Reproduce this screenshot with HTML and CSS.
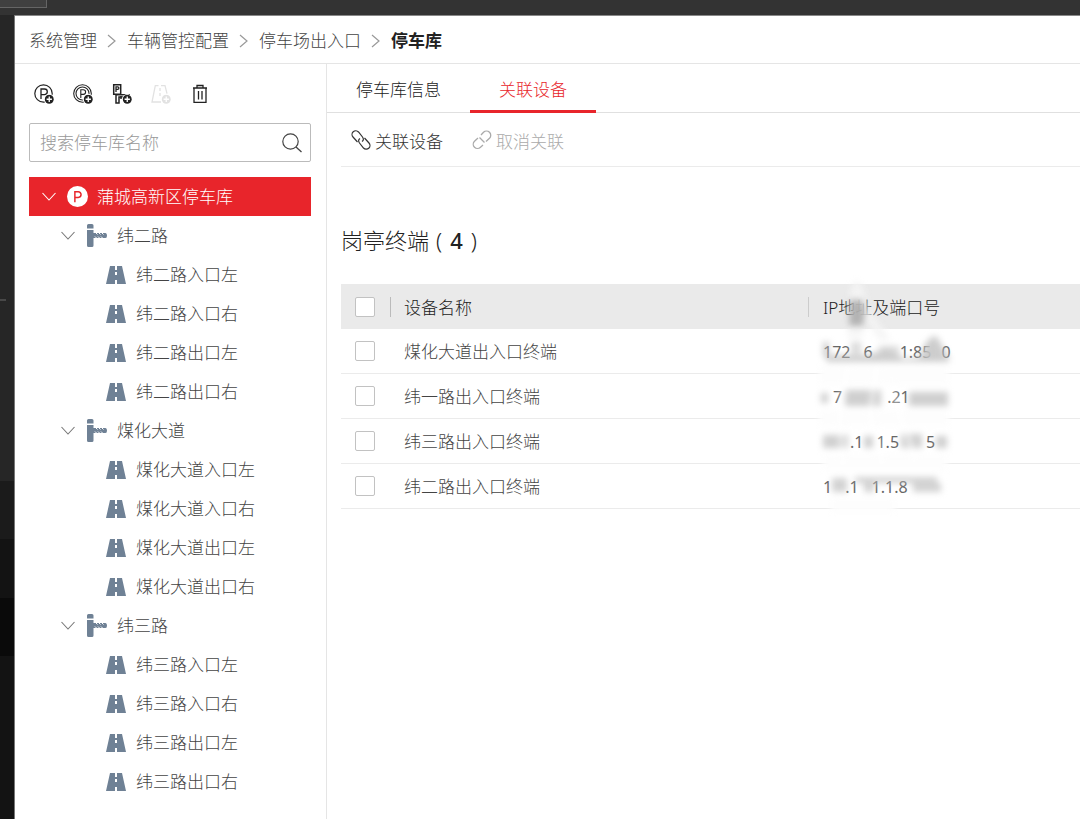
FILE: index.html
```html
<!DOCTYPE html>
<html lang="zh-CN">
<head>
<meta charset="utf-8">
<meta name="viewport" content="width=device-width, initial-scale=1">
<title>停车库</title>
<link rel="stylesheet" href="styles.css">
</head>
<body>
<svg class="defs" aria-hidden="true">
  <symbol id="chev" viewBox="0 0 16 16"><path d="M1.500 4 8 11l6.500-7" fill="none" stroke="currentColor" stroke-width="1.100"/></symbol>
  <symbol id="sep" viewBox="0 0 10 16"><path d="M1 2l7 6-7 6" fill="none" stroke="currentColor" stroke-width="1.200"/></symbol>
  <symbol id="plus" viewBox="0 0 10 10"><circle cx="5" cy="5" r="4.700" fill="currentColor"/><path d="M5 2.200v5.600M2.200 5h5.600" stroke="#fff" stroke-width="1.400"/></symbol>
  <symbol id="gate" viewBox="0 0 20 24"><path fill="#6f8195" d="M1.500 0h3.500q1.500 0 1.500 1.500V4.500H0V1.500Q0 0 1.500 0zM0 6h6.500v3H18.500q1.500 0 1.500 2.500t-1.500 2.500H6.500v7.500q0 1.500-1.500 1.500H1.500Q0 23 0 21.500z"/><path d="M9 9l1.500 1.500M12 9l1.500 1.500M15 9l1.500 1.500M9.500 14l-1.500-1.500M12.500 14l-1.500-1.500M15.500 14l-1.500-1.500" stroke="#fff" stroke-width="1"/></symbol>
  <symbol id="road" viewBox="0 0 20 18"><path fill="#6f8195" fill-rule="evenodd" d="M4 0H9v4h2V0h5L20 18h-9v-4H9v4H0zM9 6v3h2V6z"/></symbol>
</svg>
<div class="topbar"><div class="topbar-tab"></div></div>
<div class="shell">
  <div class="rail"><i class="rail-a"></i><i class="rail-b"></i><i class="rail-c"></i><i class="rail-d"></i><i class="rail-e"></i></div>
  <div class="page">
    <nav class="crumbs" aria-label="导航">
      <a href="#">系统管理</a><svg class="sep"><use href="#sep"/></svg>
      <a href="#">车辆管控配置</a><svg class="sep"><use href="#sep"/></svg>
      <a href="#">停车场出入口</a><svg class="sep"><use href="#sep"/></svg>
      <strong>停车库</strong>
    </nav>
    <div class="body">
      <aside class="side">
        <div class="actions">
          <button type="button" aria-label="添加停车库"><svg viewBox="0 0 20 20"><circle cx="9.500" cy="9.500" r="8.700" fill="none" stroke="currentColor" stroke-width="1.200"/><path d="M7 15V5h3.500a2.800 2.800 0 0 1 0 5.600H7" fill="none" stroke="currentColor" stroke-width="1.300"/><circle cx="15.200" cy="15.200" r="5.400" fill="#fff"/><use href="#plus" x="10.500" y="10.500" width="9.500" height="9.500"/></svg></button>
          <button type="button" aria-label="添加子停车库"><svg viewBox="0 0 20 20"><g fill="none" stroke="currentColor" stroke-width="1.100"><circle cx="9.500" cy="9.500" r="8.800"/><circle cx="9.500" cy="9.500" r="6.500"/><path d="M7.800 14V5.800h2.500a2.300 2.300 0 0 1 0 4.600H8"/></g><circle cx="15.200" cy="15.200" r="5.400" fill="#fff"/><use href="#plus" x="10.500" y="10.500" width="9.500" height="9.500"/></svg></button>
          <button type="button" aria-label="添加出入口"><svg viewBox="0 0 20 20"><g fill="none" stroke="currentColor"><path d="M1.700.700h7v9.600h-7z" stroke-width="1.500"/><path d="M4 8V2.800h1.600a1.300 1.300 0 0 1 0 2.600H4" stroke-width="1.300"/><path d="M4 10.500V19h3v-6h4M4 10.800h14M9 12v3" stroke-width="1.500"/></g><circle cx="15.200" cy="15.200" r="5.200" fill="#fff"/><use href="#plus" x="10.500" y="10.500" width="9.500" height="9.500"/></svg></button>
          <button type="button" aria-label="添加车道" disabled><svg viewBox="0 0 20 20"><path d="M7.500 1.700H4.300L1 18h9M10 1.700h4l2 8M9 4v3M9 9v3" fill="none" stroke="currentColor" stroke-width="1.300"/><use href="#plus" x="10.500" y="10.500" width="9.500" height="9.500"/></svg></button>
          <button type="button" aria-label="删除"><svg viewBox="0 0 20 20"><path d="M3 4h14M7 3.500V1.500h6v2M4 4v14.300h12V4M8.500 7v8.500M12 7v8.500" fill="none" stroke="currentColor" stroke-width="1.300"/></svg></button>
        </div>
        <div class="search">
          <input type="text" placeholder="搜索停车库名称" aria-label="搜索停车库名称">
          <button type="button" aria-label="搜索"><svg viewBox="0 0 20 20"><circle cx="8.500" cy="8.500" r="7.700" fill="none" stroke="currentColor" stroke-width="1.200"/><path d="M14 14l5.500 5" stroke="currentColor" stroke-width="1.300"/></svg></button>
        </div>
        <ul class="tree">
          <li><button type="button" class="node root"><svg class="chev"><use href="#chev"/></svg><svg class="ico" viewBox="0 0 20 20"><circle cx="10" cy="10" r="10" fill="#fff"/><path d="M7.500 15.500V5.500h3.200a2.700 2.700 0 0 1 0 5.400H7.500" fill="none" stroke="#e8252b" stroke-width="1.400"/></svg>蒲城高新区停车库</button>
            <ul>
              <li><button type="button" class="node branch"><svg class="chev"><use href="#chev"/></svg><svg class="gate"><use href="#gate"/></svg>纬二路</button>
                <ul>
                  <li><button type="button" class="node leaf"><svg class="road"><use href="#road"/></svg>纬二路入口左</button></li>
                  <li><button type="button" class="node leaf"><svg class="road"><use href="#road"/></svg>纬二路入口右</button></li>
                  <li><button type="button" class="node leaf"><svg class="road"><use href="#road"/></svg>纬二路出口左</button></li>
                  <li><button type="button" class="node leaf"><svg class="road"><use href="#road"/></svg>纬二路出口右</button></li>
                </ul></li>
              <li><button type="button" class="node branch"><svg class="chev"><use href="#chev"/></svg><svg class="gate"><use href="#gate"/></svg>煤化大道</button>
                <ul>
                  <li><button type="button" class="node leaf"><svg class="road"><use href="#road"/></svg>煤化大道入口左</button></li>
                  <li><button type="button" class="node leaf"><svg class="road"><use href="#road"/></svg>煤化大道入口右</button></li>
                  <li><button type="button" class="node leaf"><svg class="road"><use href="#road"/></svg>煤化大道出口左</button></li>
                  <li><button type="button" class="node leaf"><svg class="road"><use href="#road"/></svg>煤化大道出口右</button></li>
                </ul></li>
              <li><button type="button" class="node branch"><svg class="chev"><use href="#chev"/></svg><svg class="gate"><use href="#gate"/></svg>纬三路</button>
                <ul>
                  <li><button type="button" class="node leaf"><svg class="road"><use href="#road"/></svg>纬三路入口左</button></li>
                  <li><button type="button" class="node leaf"><svg class="road"><use href="#road"/></svg>纬三路入口右</button></li>
                  <li><button type="button" class="node leaf"><svg class="road"><use href="#road"/></svg>纬三路出口左</button></li>
                  <li><button type="button" class="node leaf"><svg class="road"><use href="#road"/></svg>纬三路出口右</button></li>
                </ul></li>
            </ul></li>
        </ul>
      </aside>
      <main class="main">
        <div class="tabs"><button type="button">停车库信息</button><button type="button" class="on">关联设备</button></div>
        <div class="content">
          <div class="tools">
            <button type="button"><svg viewBox="0 0 20 20"><g fill="none" stroke="currentColor" stroke-width="1.200"><path d="M6.500 12 2 7A3.600 3.600 0 0 1 7.500 2l4 5q2 3-.500 4.500"/><path d="M13.500 8l4.500 5a3.600 3.600 0 0 1-5.500 5l-4-5q-2-3 .500-4.500"/></g></svg>关联设备</button>
            <button type="button" disabled><svg viewBox="0 0 20 20"><g fill="none" stroke="currentColor" stroke-width="1.300"><path d="M9 5l2.500-2.700a4 4 0 0 1 6 6L14 11.500M11 15l-2.500 2.200a4 4 0 0 1-6-6L6 8M7.500 7.500l5 5"/></g></svg>取消关联</button>
          </div>
          <h2>岗亭终端<span class="count">(<b>4</b>)</span></h2>
          <table>
            <thead><tr>
              <th class="check"><input type="checkbox" aria-label="全选"></th>
              <th class="name">设备名称</th>
              <th class="ip">IP地址及端口号
                <svg class="smear" viewBox="0 0 160 240" aria-hidden="true">
                  <g class="soft">
                    <path d="M43 58 45 10Q52-8 59 10L63 28 86 60H74L61 40 56 58z" fill="#f5f5f5" opacity=".85"/>
                    <path d="M45 20h12l3 12-2 14H44z" fill="#888" opacity=".6"/>
                    <path d="M14 87H144V104H14zM14 131H144V146H14zM18 175H142V190H18zM26 218H90V232H26z" fill="#fdfdfd"/>
                    <path d="M18 62h6v15h-6zM20 75H62L82 69 100 79 114 77 122 62Q130 50 135 62L144 77V82H22z" fill="#bbb" opacity=".7"/>
                    <path d="M46 62h10v12h-10zM74 66h20v10H74zM119 63h14v17h-14z" fill="#ccc" opacity=".7"/>
                    <path d="M16 113h7v10h-7zM40 110H76V126H40zM104 112H143V126H104z" fill="#bbb" opacity=".7"/>
                    <path d="M18 155H43V168H18zM59 156H68V168H59zM96 154H117V168H96zM131 156H142V168H131z" fill="#c0c0c0" opacity=".75"/>
                    <path d="M27 198H42V212H27zM59 200H69V212H59zM50 197H132V203H50zM108 203H136V212H108z" fill="#c0c0c0" opacity=".7"/>
                    <path d="M85 105 95 135 111 180M72 85 65 135 78 185M43 85 35 135 38 185" fill="none" stroke="#fff" stroke-width="6" opacity=".5"/>
                  </g>
                </svg></th>
            </tr></thead>
            <tbody>
              <tr><td class="check"><input type="checkbox" aria-label="煤化大道出入口终端"></td><td>煤化大道出入口终端</td><td class="ip"><span class="addr">172<i class="m"></i>6<i class="l"></i>1:85<i class="s"></i>0</span></td></tr>
              <tr><td class="check"><input type="checkbox" aria-label="纬一路出入口终端"></td><td>纬一路出入口终端</td><td class="ip"><span class="addr"><i class="s"></i>7<i class="xl"></i>.21<i class="l"></i></span></td></tr>
              <tr><td class="check"><input type="checkbox" aria-label="纬三路出入口终端"></td><td>纬三路出入口终端</td><td class="ip"><span class="addr"><i class="l"></i>.1<i class="m"></i>1.5<i class="l"></i>5</span></td></tr>
              <tr><td class="check"><input type="checkbox" aria-label="纬二路出入口终端"></td><td>纬二路出入口终端</td><td class="ip"><span class="addr">1<i class="m"></i>.1<i class="m"></i>1.1.8</span></td></tr>
            </tbody>
          </table>
        </div>
      </main>
    </div>
  </div>
</div>
</body>
</html>
```

FILE: styles.css
```css
* { box-sizing: border-box; }
body {
  margin: 0;
  min-height: 100vh;
  display: flex;
  flex-direction: column;
  background: #fff;
  color: #444;
  font: 300 17px/24px "Noto Sans", "Noto Sans CJK SC", sans-serif;
}
button, input { font: inherit; color: inherit; }
button { background: none; border: 0; padding: 0; cursor: pointer; }
ul { list-style: none; margin: 0; padding: 0; }
svg { display: block; flex: none; }
.defs { position: absolute; width: 0; height: 0; }

.topbar { height: 15px; background: #333; }
.topbar-tab { width: 47px; height: 8px; background: #404040; border: 1px solid #656565; border-width: 0 1px 1px 0; }
.shell { flex: 1; display: flex; }
.rail { width: 15px; display: flex; flex-direction: column; background: #131313; border-right: 1px solid #777; }
.rail-a { height: 466px; background: linear-gradient(#484848, #484848) 0 284px / 6px 2px no-repeat #262626; }
.rail-b { height: 58px; background: #1b1b1b; }
.rail-c { height: 59px; background: #131313; }
.rail-d { height: 58px; background: #0a0a0a; }
.page { flex: 1; min-width: 0; display: flex; flex-direction: column; border-top: 1px solid #888; }

.crumbs { height: 48px; padding: 2px 14px 0; display: flex; align-items: center; border-bottom: 1px solid #e5e5e5; }
.crumbs a { color: #444; text-decoration: none; }
.crumbs strong { color: #222; font-weight: 700; }
.sep { width: 10px; height: 16px; margin: 0 10px; color: #999; }

.body { flex: 1; display: flex; }
.side { width: 312px; padding: 20px 15px 0 14px; border-right: 1px solid #e5e5e5; }
.actions { display: flex; gap: 19px; padding-left: 5px; color: #222; }
.actions svg { width: 20px; height: 20px; }
.actions button:disabled { color: #e2e2e2; }
.search { display: flex; align-items: center; height: 39px; margin: 19px 0 15px; padding: 0 8px 0 10px; border: 1px solid #bbb; border-radius: 2px; }
.search input { flex: 1; min-width: 0; border: 0; padding: 0; outline: 0; }
.search input::placeholder { color: #999; opacity: 1; }
.search svg { width: 20px; height: 20px; }

.node { display: flex; align-items: center; width: 100%; height: 39px; text-align: left; }
.root { padding-left: 12px; background: #e8252b; color: #fff; }
.branch { padding-left: 31px; }
.leaf { padding-left: 77px; }
.chev { width: 16px; height: 16px; margin-right: 10px; color: #777; }
.root .chev { color: #fff; }
.ico { width: 21px; height: 21px; margin-right: 9px; }
.gate { width: 20px; height: 24px; margin: 0 10px 0 1px; }
.road { width: 20px; height: 18px; margin-right: 10px; }

.main { flex: 1; min-width: 0; }
.tabs { display: flex; height: 49px; border-bottom: 1px solid #e0e0e0; }
.tabs button { height: 49px; padding: 6px 29px 0; color: #222; border-bottom: 3px solid transparent; }
.tabs .on { color: #e8252b; border-color: #e8252b; }
.content { padding-left: 14px; }
.tools { display: flex; gap: 29px; height: 54px; padding: 4px 10px 0; border-bottom: 1px solid #ebebeb; }
.tools button { display: flex; align-items: center; gap: 4px; color: #333; }
.tools button:disabled { color: #aaa; }
.tools svg { width: 20px; height: 20px; margin-bottom: 4px; }
h2 { display: flex; margin: 57px 0 27px; font-size: 22px; line-height: 33px; font-weight: 300; color: #222; }
.count { display: flex; gap: 8px; padding-left: 7px; }
.count b { font-weight: 500; }

table { width: 100%; border-collapse: separate; border-spacing: 0; table-layout: fixed; }
th, td { height: 45px; padding: 2px 0 0; text-align: left; font-weight: 300; }
th { background: #eaeaea; color: #222; }
td { border-bottom: 1px solid #ebebeb; }
.check { width: 63px; padding: 0 0 0 14px; }
.name { width: 405px; }
th.name { background: linear-gradient(#ccc, #ccc) right 0 center / 1px 20px no-repeat #eaeaea; }
th.check { background: linear-gradient(#bbb, #bbb) 49px center / 1px 20px no-repeat #eaeaea; }
.ip { position: relative; padding-left: 14px; }
input[type="checkbox"] { appearance: none; display: block; width: 20px; height: 20px; margin: 0; background: #fff; border: 1px solid #c2c2c2; border-radius: 2px; }

.smear { position: absolute; z-index: 1; left: -4px; top: -4px; width: 160px; height: 240px; overflow: visible; pointer-events: none; }
.soft { filter: blur(3px); }
.addr { display: flex; align-items: center; font-size: 16px; font-weight: 400; color: #666; }
.addr .s { width: 10px; }
.addr .m { width: 13px; }
.addr .l { width: 27px; }
.addr .xl { width: 45px; }
```
